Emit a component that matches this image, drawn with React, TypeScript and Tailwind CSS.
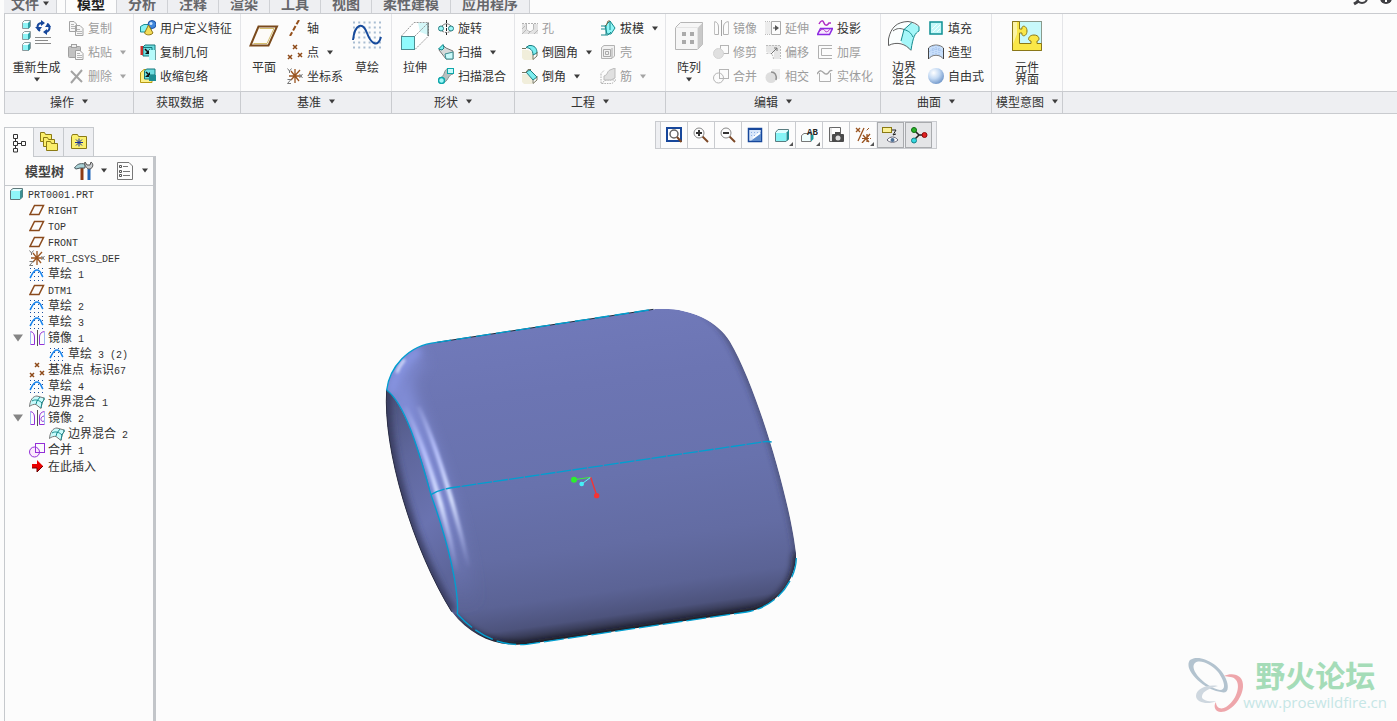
import { useState } from "react";
import type { ReactNode } from "react";

type IconProps = { w?: number; h?: number; children: ReactNode };

const Svg = ({ w = 16, h = 16, children }: IconProps) => (
    <svg width={w} height={h} viewBox={`0 0 ${w} ${h}`} fill="none" className="shrink-0" aria-hidden="true">
        {children}
    </svg>
);

const Arrow = ({ muted = false }: { muted?: boolean }) => (
    <Svg w={6} h={5}>
        <path d="M0 0.500H6L3 4.500Z" fill={muted ? "#a4a4a4" : "#3c3c3c"} />
    </Svg>
);

/* ---------- large ribbon icons ---------- */

const cube = (x: number, y: number) => (
    <>
        <path d={`M${x + 0.5} ${y + 2.5}l2-2h6v6l-2 2h-6z`} fill="#f4ffff" stroke="#8b9a9d" />
        <path d={`M${x + 1} ${y + 3}h5v5h-5z`} fill="#8ef5f7" />
        <path d={`M${x + 8} ${y + 1}v6l-2 2v-6z`} fill="#2f9ea4" />
    </>
);

const RegenerateIcon = () => (
    <Svg w={30} h={32}>
        {cube(0, 0)}
        {cube(0, 11)}
        {cube(0, 22)}
        <path d="M18 11C14 8 15 3 20 3" stroke="#17479b" strokeWidth="2" />
        <path d="M19 0v6l4-3zM13 7h7l-3 4z" fill="#17479b" />
        <path d="M25 4C29 6 28 11 24 12" stroke="#17479b" strokeWidth="2" />
        <path d="M25 9v6l-4-3zM23 7h6l-3-4z" fill="#17479b" />
        <path d="M13 17.500h16M13 20.500h13M13 23.500h16" stroke="#8a8a8a" />
    </Svg>
);

const PlaneIcon = () => (
    <Svg w={30} h={32}>
        <path d="M9.500 6.500H28L19.500 25.500H1.500Z" fill="#fdfbf8" stroke="#7a4a1c" strokeWidth="2" />
        <path d="M10.500 8.500H25L18 23.500H4.500" stroke="#d3bd6c" />
    </Svg>
);

const SketchIcon = () => (
    <Svg w={30} h={32}>
        {[2.5, 7.5, 12.5, 17.5, 22.5, 27.5].map((y) => (
            <path key={y} d={`M1 ${y}H30`} stroke="#a9bdd2" strokeWidth="2" strokeDasharray="2 3.200" />
        ))}
        <path d="M1 20C3 3 11 2 15 13S26 28 29 17" stroke="#164a9c" strokeWidth="2" />
    </Svg>
);

const ExtrudeIcon = () => (
    <Svg w={30} h={32}>
        <path d="M14 2.500H28.500V16L15 29V16H1.500Z" fill="#fff" />
        <path d="M18 2.500H28V15L20 12Z" fill="#d3f7f8" />
        <path d="M1.500 16L14 2.500H28.500V16L15 29.500M15 16L28.500 2.500" stroke="#999" strokeDasharray="2 1" />
        <path d="M28 3V16" stroke="#4d5a5d" />
        <rect x="1.500" y="16.500" width="13" height="13" fill="#90fbfc" stroke="#4d8e92" />
    </Svg>
);

const PatternIcon = () => (
    <Svg w={30} h={32}>
        <path d="M1.500 7.500L6.500 2.500H28.500V24.500L23.500 29.500H1.500Z" fill="#f6f6f6" stroke="#b5b5b5" />
        <path d="M24 7.500L28.500 3V24.500L24 29Z" fill="#c9c9c9" />
        <path d="M1.500 7.500H23.500V29.500" stroke="#e4e4e4" />
        {[8, 16].map((x) => (
            <g key={x}>
                <rect x={x} y="12" width="4" height="4" fill="#aaa" />
                <rect x={x} y="20" width="4" height="4" fill="#aaa" />
            </g>
        ))}
    </Svg>
);

const BoundaryIcon = () => (
    <Svg w={32} h={32}>
        <path d="M0.500 25.500V19C3 7 9 2 20 1.500L31 6.500V11C27 13 25 16 23 30.500L15 24C10 22 5 23 0.500 25.500Z" fill="#fbffff" />
        <path d="M24 3L31 6.500V11C27 13 25 16 23 30.500L13 22L16 10Z" fill="#a5f7f9" />
        <path d="M23 30.500C18 24 9 21 0.500 25.500V19C3 7 9 2 20 1.500C25 2 29 4 31 6.500M5 11C9 8 12 8 16 9.500" stroke="#5f5f5f" />
        <path d="M24 2.500L16 9.500L13 21M16 9.500C21 11 23 13 25 17M31 6.500V11C27 13 25 17 23 30" stroke="#12898c" />
    </Svg>
);

const ComponentIcon = () => (
    <Svg w={30} h={32}>
        <rect x="0.500" y="1.500" width="29" height="29" fill="#c8f9fb" stroke="#8a9a8c" />
        <path
            d="M0.500 1.500H7.500V9H10C9 5 15 5 15 11C15 17 9 17 10 13H7.500V23.500H19V21C15 21 16 15 22 15C28 15 28 21 25 21V23.500H29.500V30.500H0.500Z"
            fill="#f9e748"
            stroke="#8a7718"
        />
        <path d="M1 2H5V14L1 24Z" fill="#fbf3a4" />
    </Svg>
);

/* ---------- small ribbon icons ---------- */

const CopyIcon = () => (
    <Svg>
        <path d="M1.500 1.500H6L8.500 4V11.500H1.500ZM7.500 5.500H12L15 8.500V15.500H7.500Z" fill="#f6f6f6" stroke="#a3a3a3" />
        <path d="M3 4.500H6M3 6.500H7M3 8.500H7M9 9.500H12M9 11.500H14M9 13.500H14" stroke="#b5b5b5" />
    </Svg>
);

const PasteIcon = () => (
    <Svg>
        <rect x="0.500" y="2.500" width="12" height="11" rx="1" fill="#c2c2c2" stroke="#a0a0a0" />
        <rect x="3.500" y="0.500" width="5" height="3" fill="#eee" stroke="#a0a0a0" />
        <path d="M7.500 6.500H12L15 9.500V15.500H7.500Z" fill="#f8f8f8" stroke="#a0a0a0" />
        <path d="M9 9.500H12M9 11.500H14M9 13.500H14" stroke="#b5b5b5" />
    </Svg>
);

const DeleteIcon = () => (
    <Svg>
        <path d="M3 3L14 14M14 2L3 15" stroke="#a3a3a3" strokeWidth="2" />
    </Svg>
);

const UdfIcon = () => (
    <Svg>
        <path d="M0.500 6.500L4 4.500H11V10L8 12H0.500Z" fill="#87f2f4" stroke="#1c8d91" />
        <circle cx="12" cy="4.500" r="4" fill="#3f86dc" stroke="#1c51a4" />
        <circle cx="11" cy="3.500" r="1.500" fill="#cfe6ff" />
        <path d="M8.500 5L13 13C11 15.500 6 15.500 4.500 13Z" fill="#f4dc58" stroke="#8f7714" />
    </Svg>
);

const CopyGeomIcon = () => (
    <Svg>
        <path d="M3 3L5 1H15V7H10V12H3Z" fill="#6fdde0" stroke="#15777b" />
        <path d="M3 3.500H12V11" stroke="#15777b" />
        <rect x="0.500" y="2" width="2.500" height="9" fill="#c92f2b" />
        <path d="M5 5L8 8" stroke="#111" strokeWidth="1.500" />
        <path d="M10 5V10H5Z" fill="#111" />
        <rect x="9" y="6" width="7" height="10" fill="#b5fafb" />
        <path d="M15.500 6V16" stroke="#6c9da0" />
    </Svg>
);

const ShrinkwrapIcon = () => (
    <Svg>
        <path d="M0.500 4.500L4 1.500H12V14.500H0.500Z" fill="#fbf08b" stroke="#b79b12" />
        <path d="M4.500 3L6.500 1H15V7H10V11H4.500Z" fill="#6fdde0" stroke="#15777b" />
        <path d="M6 4L8 6" stroke="#111" strokeWidth="1.500" />
        <path d="M10 4V9H5Z" fill="#111" />
        <rect x="9" y="7" width="7" height="6" fill="#1d8d92" />
    </Svg>
);

const AxisIcon = () => (
    <Svg>
        <path d="M12 0L3 16" stroke="#94501c" strokeWidth="2" strokeDasharray="5 2" />
    </Svg>
);

const cross = (x: number, y: number) => <path d={`M${x} ${y}l4 4m0-4l-4 4`} stroke="#8e4a19" strokeWidth="1.500" />;

const PointIcon = () => (
    <Svg>
        {cross(6, 1)}
        {cross(1, 11)}
        {cross(11, 9)}
    </Svg>
);

const CsysIcon = () => (
    <Svg>
        <path d="M8 1V15M2 8H13M4 3L12 13M13 2L4 12" stroke="#9a5420" strokeWidth="1.300" />
        <path d="M0.500 0.500L2.500 3L4.500 0.500M2.500 3V5M12.500 6L15.500 10M15.500 6L12.500 10M0.500 11.500H4L0.500 15.500H4" stroke="#777" />
    </Svg>
);

const RevolveIcon = () => (
    <Svg>
        <path d="M8.500 0V16" stroke="#222" strokeDasharray="3 1" />
        <path d="M4 6C7 3 10 3 13 6" stroke="#777" />
        <path d="M4 11C7 13 10 13 13 11" stroke="#777" strokeDasharray="2 1" />
        <circle cx="3" cy="8.500" r="2.500" fill="#9ff7f8" stroke="#277c80" />
        <circle cx="13" cy="8.500" r="2.500" fill="#9ff7f8" stroke="#277c80" />
    </Svg>
);

const SweepIcon = () => (
    <Svg>
        <path d="M5 1L8 4L15 7V15H8L1 6Z" fill="#d5d9d9" stroke="#777" />
        <path d="M7 10L15 8V15H8Z" fill="#c9fafa" stroke="#3d8d91" />
        <path d="M0.500 5L5 0.500L6 4L4 6Z" fill="#7df0f2" stroke="#14888c" />
    </Svg>
);

const SweptBlendIcon = () => (
    <Svg>
        <path d="M1 10C8 9 5 1 10 1H15V6C9 7 11 14 4 15Z" fill="#b9c1c1" stroke="#8a9696" />
        <rect x="9.500" y="0.500" width="6" height="5" fill="#c9fafa" stroke="#0ea7ab" />
        <circle cx="3.500" cy="12.500" r="3" fill="#9ff7f8" stroke="#0ea7ab" strokeWidth="1.500" />
    </Svg>
);

const HoleIcon = () => (
    <Svg>
        <path d="M0 4H4V9L6 12H10L12 9V4H16V14H0Z" fill="#e2e2e2" />
        <path d="M0 3.500H16" stroke="#b0b0b0" strokeDasharray="2 1" />
        <path d="M4.500 4V9.500L7 11.500H9L11.500 9.500V4M0 14L4 10M0 9L3 6M12 14L16 10M6 14L8 12" stroke="#b8b8b8" />
    </Svg>
);

const RoundIcon = () => (
    <Svg>
        <path d="M0 6H6L11 9V16H2L0 14Z" fill="#f1eedb" />
        <path d="M4 3.500L7 1.500H9C14 2 15 6 15 9L11 11C11 6 8 4 4 3.500Z" fill="#7beef0" stroke="#1b7d81" />
        <path d="M0 4.500H4M11 11V15.500L15 12V8" stroke="#77765f" />
    </Svg>
);

const ChamferIcon = () => (
    <Svg>
        <path d="M0 6H5L10 11V16H2L0 14Z" fill="#f1eedb" />
        <path d="M4 4L8 2L15 9L11 12Z" fill="#7beef0" stroke="#1b7d81" />
        <path d="M0 4.500H4L6 1.500H9M11 12V15.500L15 12V8" stroke="#77765f" />
    </Svg>
);

const DraftIcon = () => (
    <Svg>
        <path d="M5 6L10 1L15 8L11 14H7Z" fill="#8ff6f7" stroke="#16898c" />
        <path d="M1 6H6V15M1 9H5M1 15H8L11 12M10 1V10" stroke="#16898c" />
        <path d="M6 6L8 1H10" stroke="#7b6d48" />
    </Svg>
);

const ShellIcon = () => (
    <Svg>
        <path d="M1.500 3.500L4 1.500H14.500V12L12 14.500H1.500Z" fill="#f1f1f1" stroke="#b2b2b2" />
        <path d="M3.500 5.500H10.500V12.500H3.500ZM5.500 7.500H8.500V10.500H5.500ZM12 4V14" stroke="#aaa" />
    </Svg>
);

const RibIcon = () => (
    <Svg>
        <path d="M1 5.500L4 2.500M1 15.500L6 12H16L12 15.500ZM1 6V15" stroke="#b0b0b0" strokeDasharray="1.500 1" />
        <path d="M4 11V8C8 7 7 3 10 2L15 0V10L11 12H4Z" fill="#e0e0e0" stroke="#bbb" />
    </Svg>
);

const MirrorIcon = ({ muted = false, swirl = false }: { muted?: boolean; swirl?: boolean }) => {
    const c = muted ? "#b2b2b2" : "#9330d8";
    return (
        <Svg>
            <path d="M1.500 1.500C4 2 5.500 4 5.500 7V14.500H1.500M15.500 1.500C12 2 10.500 4 10.500 7V14.500H15.500" stroke={c} />
            <path d="M1.500 2V14M15.500 2V14" stroke={muted ? "#c2c2c2" : "#9fbbf2"} />
            <path d="M8.500 0V16" stroke={muted ? "#a2a2a2" : "#555"} />
            {swirl && <path d="M15 6C10 7 12 13 15 11" stroke={c} />}
        </Svg>
    );
};

const TrimIcon = () => (
    <Svg>
        <rect x="7.500" y="1.500" width="8" height="8" stroke="#b5b5b5" />
        <circle cx="5.500" cy="9.500" r="5" fill="#e0e0e0" stroke="#d4d4d4" />
    </Svg>
);

const MergeIcon = ({ muted = false }: { muted?: boolean }) => (
    <Svg>
        <circle cx="5.500" cy="10" r="5" fill={muted ? "none" : "#fbeafd"} stroke={muted ? "#b5b5b5" : "#9330d8"} />
        <rect x="6.500" y="1.500" width="9" height="9" stroke={muted ? "#b5b5b5" : "#9330d8"} />
    </Svg>
);

const ExtendIcon = () => (
    <Svg>
        <rect x="0" y="2" width="6" height="12" fill="#ececec" />
        <path d="M6.500 1.500H15.500V14.500H6.500Z" stroke="#aaa" />
        <path d="M8 8H12" stroke="#555" />
        <path d="M10 5V11L14 8Z" fill="#555" />
        <path d="M0 1.500H5M0 14.500H5" stroke="#bbb" strokeDasharray="1 1" />
    </Svg>
);

const OffsetIcon = () => (
    <Svg>
        <path d="M1 1H15V15H9V8H1Z" fill="#e6e6e6" />
        <path d="M1.500 9.500C6 8 8 10 8.500 15M1 1.500H15.500V15" stroke="#bbb" strokeDasharray="2 1" />
        <path d="M6 10L12 4M9 4H12V7" stroke="#777" />
    </Svg>
);

const IntersectIcon = () => (
    <Svg>
        <rect x="7" y="1" width="8" height="10" fill="#ececec" />
        <circle cx="6" cy="9.500" r="5.500" fill="#dedede" />
        <path d="M6 4C10 4 12 7 11 12" stroke="#8f8f8f" strokeWidth="1.500" />
    </Svg>
);

const ProjectIcon = () => (
    <Svg>
        <path d="M2 4C4 0 6 0 7 3S10 6 12 3L14 3" stroke="#b02dc4" strokeWidth="1.500" />
        <path d="M3.500 8.500H15.500L12.500 14.500H0.500Z" fill="#f7e9ff" stroke="#8d2be2" strokeWidth="1.500" />
        <path d="M2 12C5 8 7 9 8 11S12 11 13 9" stroke="#b02dc4" />
    </Svg>
);

const ThickenIcon = () => (
    <Svg>
        <path d="M15 1.500H1.500V14.500H15M15 4.500H4.500V11.500H15" stroke="#b0b0b0" />
    </Svg>
);

const SolidifyIcon = () => (
    <Svg>
        <path d="M2.500 5V13.500H13.500V5" stroke="#b0b0b0" />
        <path d="M0 6C3 1 5 3 7 5S11 6 12 4S15 3 15 2" stroke="#a5a5a5" strokeWidth="1.500" />
    </Svg>
);

const FillIcon = () => (
    <Svg>
        <rect x="2" y="2" width="12" height="12" fill="#c4f8f9" stroke="#0d8f93" strokeWidth="1.500" />
        <path d="M4 9L9 4M5 12L12 5M9 12L12 9" stroke="#f4ffff" />
    </Svg>
);

const StyleIcon = () => (
    <Svg>
        <path d="M0.500 4C4 0 12 0 15.500 4V15C12 10 4 10 0.500 15Z" fill="#c7defa" stroke="#777" />
        <path d="M5 2V11M8 1V11M11 2V11M1 8C5 4 11 4 15 8" stroke="#9dbcea" strokeDasharray="1 1" />
        <path d="M0.500 4V15M15.500 4V15" stroke="#444" />
    </Svg>
);

const FreestyleIcon = () => (
    <Svg>
        <defs>
            <radialGradient id="ball" cx="0.35" cy="0.3" r="0.75">
                <stop offset="0" stopColor="#fff" />
                <stop offset="0.5" stopColor="#c3d9f3" />
                <stop offset="1" stopColor="#6e95c8" />
            </radialGradient>
        </defs>
        <circle cx="8" cy="8" r="8" fill="url(#ball)" />
    </Svg>
);

/* ---------- graphics toolbar icons ---------- */

const lens = (sign: string) => (
    <>
        <path d="M9 9L15 15" stroke="#7c4826" strokeWidth="2" />
        <circle cx="6" cy="6" r="5" fill="#fdfdfd" stroke="#888" />
        <path d={sign} stroke="#333" strokeWidth="2" />
    </>
);

const RefitIcon = () => (
    <Svg>
        <rect x="1" y="1" width="14" height="13" fill="#fff" stroke="#17479b" strokeWidth="2" />
        <circle cx="8" cy="7" r="4" fill="#fff" stroke="#666" strokeWidth="1.500" />
        <path d="M11 10L15.500 15" stroke="#7c4826" strokeWidth="2" />
    </Svg>
);
const ZoomInIcon = () => <Svg>{lens("M3 6H9M6 3V9")}</Svg>;
const ZoomOutIcon = () => <Svg>{lens("M3 6H9")}</Svg>;

const RepaintIcon = () => (
    <Svg>
        <rect x="1.500" y="1.500" width="13" height="13" fill="#d8e6fa" stroke="#17479b" strokeWidth="1.500" />
        <path d="M1 1H15V3H1Z" fill="#17479b" />
        <path d="M4 14L14 5V14Z" fill="#5d8bcb" />
        <path d="M6 11L13 6" stroke="#fff" strokeWidth="2" />
        <path d="M4 5.500H11M4 8.500H9" stroke="#8db0e4" strokeDasharray="1 2" />
    </Svg>
);

const DisplayStyleIcon = () => (
    <Svg>
        <path d="M1.500 5.500L4 2.500H14.500V12L12 14.500H1.500Z" fill="#dffdfe" stroke="#5a7c80" />
        <path d="M2 6H12V14H2Z" fill="#86f3f5" />
        <path d="M12.500 5.500L15 3V12L12.500 14.500Z" fill="#218b90" />
    </Svg>
);

const SavedViewIcon = () => (
    <Svg w={18}>
        <path d="M1.500 8.500L4 6.500H11V14.500H1.500Z" fill="#f0ffff" stroke="#777" />
        <path d="M11 8V14.500L13.500 12V8" fill="#1b9a9f" />
        <text x="7" y="8" fontSize="9" fontFamily="Liberation Mono, monospace" fontWeight="700" fill="#222">AB</text>
    </Svg>
);

const ViewManagerIcon = () => (
    <Svg>
        <path d="M1.500 0.500H12.500V14.500H1.500Z" fill="#fff" stroke="#666" />
        <path d="M3 0.500V14" stroke="#999" strokeDasharray="1 1" />
        <rect x="4" y="7" width="12" height="8" rx="1" fill="#4a4a4a" />
        <rect x="7" y="5" width="5" height="3" fill="#4a4a4a" />
        <circle cx="10" cy="11" r="2.500" fill="#ddd" />
    </Svg>
);

const DatumDisplayIcon = () => (
    <Svg>
        <path d="M1 1L5 5M5 1L1 5M9 1L3 14M8 8L14 15M15 7L7 16M12 7V15" stroke="#9a5420" strokeWidth="1.300" />
        <path d="M7 11.500H16M14 1L11 4" stroke="#9a5420" strokeDasharray="3 1" />
    </Svg>
);

const AnnotationIcon = () => (
    <Svg w={18} h={18}>
        <rect x="0.500" y="1.500" width="9" height="5" fill="#fbf196" stroke="#8b7a14" />
        <path d="M10 4H14L11 9L14 8" stroke="#222" />
        <path d="M5 14C8 10 13 10 16 14C13 17 8 17 5 14Z" fill="#fff" stroke="#667" />
        <circle cx="10.500" cy="14" r="2" fill="#4c6f96" />
    </Svg>
);

const SpinCenterIcon = () => (
    <Svg w={18} h={18}>
        <path d="M4 4L9 9L4 14M9 9H14" stroke="#222" strokeWidth="1.500" />
        <circle cx="4" cy="4" r="2.500" fill="#2bb32b" stroke="#0e6b10" />
        <circle cx="14.500" cy="9" r="2.500" fill="#e02020" stroke="#8d0b0b" />
        <circle cx="4" cy="14.500" r="2.500" fill="#35d8e0" stroke="#128087" />
    </Svg>
);

/* ---------- model tree icons ---------- */

const PartIcon = () => (
    <Svg w={14} h={14}>
        <path d="M0.500 3.500L3 1.500H12.500V10L10 12.500H0.500Z" fill="#dffdfe" stroke="#5f7779" />
        <rect x="1" y="4" width="9" height="8" fill="#90f6f8" />
        <path d="M10 4L12.500 2V10L10 12.500Z" fill="#3b9094" />
    </Svg>
);

const TreePlaneIcon = () => (
    <Svg>
        <path d="M5.500 3.500H14.500L10 12.500H1Z" stroke="#8a4a1c" strokeWidth="1.500" />
    </Svg>
);

const TreeSketchIcon = () => (
    <Svg>
        {[2.5, 6.5, 10.5, 14.5].map((y) => (
            <path key={y} d={`M1 ${y}H15`} stroke="#1f4f9d" strokeDasharray="1 3" />
        ))}
        <path d="M1 12C3 9 4 4 8 4S12 9 14 11" stroke="#1583ee" strokeWidth="1.500" />
    </Svg>
);

const TreeBlendIcon = () => (
    <Svg>
        <path d="M0.500 12.500C1 6 4 2 8 2L15 4V6C13 8 13 9 12 14.500L7 10.500C5 10 2 11 0.500 12.500Z" fill="#c8fbfc" stroke="#777" />
        <path d="M11 3L8 7L7 10M15 3.500V6C13 8 13 9 12 14M3 7C6 5 10 6 13 9" stroke="#12898c" />
    </Svg>
);

const InsertIcon = () => (
    <Svg>
        <path d="M3 6H8V2L14 8L8 14V10H3Z" fill="#e90000" />
        <path d="M3 10H8V14L14 8" stroke="#6b0000" />
    </Svg>
);

const FolderBase = ({ x, y }: { x: number; y: number }) => (
    <path d={`M${x + 0.5} ${y + 0.5}h4l1 2h6v7h-11z`} fill="#fbee6a" stroke="#8b7a14" />
);

const TreeTabIcon = () => (
    <Svg w={14} h={20}>
        <path d="M3.500 5V8M3.500 12V15M6 10.500H9" stroke="#333" />
        <path d="M1.500 1.500H5.500V5.500H1.500ZM1.500 8.500H5.500V12.500H1.500ZM1.500 15.500H5.500V19H1.500ZM9.500 8.500H13.500V12.500H9.500Z" stroke="#333" />
    </Svg>
);

const FoldersIcon = () => (
    <Svg w={20} h={20}>
        <FolderBase x={1} y={0} />
        <FolderBase x={4} y={5} />
        <FolderBase x={7} y={9} />
    </Svg>
);

const FavoritesIcon = () => (
    <Svg w={18} h={18}>
        <path d="M1.500 3.500L2.500 1.500H7.500L8.500 3.500H16.500V15.500H1.500Z" fill="#fbf06e" stroke="#8b7a14" />
        <path d="M9 5.500V13.500M5 9.500H13M6 6.500L12 12.500M12 6.500L6 12.500" stroke="#17319b" />
    </Svg>
);

const ToolsIcon = () => (
    <Svg w={20} h={20}>
        <path d="M8 7V19" stroke="#8c3b14" strokeWidth="3" />
        <path d="M0.500 7C3 3 6 2 11 3V7H6L2 8Z" fill="#a9d2d7" stroke="#46555a" />
        <path d="M15 8V19" stroke="#2366b8" strokeWidth="3" />
        <path d="M11 1L13 4H16L17 1C20 3 19 7 16 8H14C12 6 10 4 11 1Z" fill="#c9cccf" stroke="#555" />
    </Svg>
);

const ListIcon = () => (
    <Svg w={18} h={20}>
        <path d="M1.500 1.500H13L16.500 5V18.500H1.500Z" fill="#fdfdfd" stroke="#777" />
        <path d="M7 5.500H12M7 10.500H14M7 14.500H14" stroke="#777" />
        <path d="M3.500 4.500H5.500V6.500H3.500ZM3.500 9.500H5.500V11.500H3.500ZM3.500 13.500H5.500V15.500H3.500Z" stroke="#555" />
    </Svg>
);

/* ---------- ribbon ---------- */

type Command = { label: string; icon: ReactNode; muted?: boolean; menu?: boolean };

const Tool = ({ label, icon, muted = false, menu = false }: Command) => (
    <button
        type="button"
        disabled={muted}
        className={`flex h-6 items-center gap-1 whitespace-nowrap ${muted ? "text-[#9c9c9c]" : "text-[#333333]"}`}
    >
        {icon}
        <span>{label}</span>
        {menu && (
            <span className="ml-1">
                <Arrow muted={muted} />
            </span>
        )}
    </button>
);

const ToolColumn = ({ items }: { items: Command[] }) => (
    <div className="flex flex-col items-start pt-0.5">
        {items.map((item) => (
            <Tool key={item.label} {...item} />
        ))}
    </div>
);

const BigTool = ({ lines, icon, menu = false, wide = false }: { lines: string[]; icon: ReactNode; menu?: boolean; wide?: boolean }) => (
    <button
        type="button"
        className={`flex shrink-0 flex-col items-center whitespace-nowrap pt-1.5 leading-3 text-[#333333] ${wide ? "w-[63px]" : "w-[46px]"}`}
    >
        <span className="mb-[9px] flex h-8 items-center">{icon}</span>
        {lines.map((line) => (
            <span key={line}>{line}</span>
        ))}
        {menu && (
            <span className="mt-1">
                <Arrow />
            </span>
        )}
    </button>
);

const Group = ({ title, width, children }: { title: string; width: string; children: ReactNode }) => (
    <section className={`flex shrink-0 flex-col ${width}`}>
        <div className="flex h-[77px] border-r border-[#e4e5e8]">{children}</div>
        <button
            type="button"
            className="flex h-[22px] items-center justify-center gap-2 whitespace-nowrap border-r border-t border-[#c9cbcf] bg-[#eeeff2] pb-0.5 text-[#333333]"
        >
            {title}
            <Arrow />
        </button>
    </section>
);

const Ribbon = () => (
    <div className="ml-1 flex border-b border-l border-[#c9cbcf]">
        <Group title="操作" width="w-[129px]">
            <BigTool lines={["重新生成"]} icon={<RegenerateIcon />} menu wide />
            <ToolColumn
                items={[
                    { label: "复制", icon: <CopyIcon />, muted: true },
                    { label: "粘贴", icon: <PasteIcon />, muted: true, menu: true },
                    { label: "删除", icon: <DeleteIcon />, muted: true, menu: true },
                ]}
            />
        </Group>
        <Group title="获取数据" width="w-[107px]">
            <div className="pl-1.5">
                <ToolColumn
                    items={[
                        { label: "用户定义特征", icon: <UdfIcon /> },
                        { label: "复制几何", icon: <CopyGeomIcon /> },
                        { label: "收缩包络", icon: <ShrinkwrapIcon /> },
                    ]}
                />
            </div>
        </Group>
        <Group title="基准" width="w-[151px]">
            <BigTool lines={["平面"]} icon={<PlaneIcon />} />
            <ToolColumn
                items={[
                    { label: "轴", icon: <AxisIcon /> },
                    { label: "点", icon: <PointIcon />, menu: true },
                    { label: "坐标系", icon: <CsysIcon /> },
                ]}
            />
            <div className="flex flex-1 justify-center">
                <BigTool lines={["草绘"]} icon={<SketchIcon />} />
            </div>
        </Group>
        <Group title="形状" width="w-[123px]">
            <BigTool lines={["拉伸"]} icon={<ExtrudeIcon />} />
            <ToolColumn
                items={[
                    { label: "旋转", icon: <RevolveIcon /> },
                    { label: "扫描", icon: <SweepIcon />, menu: true },
                    { label: "扫描混合", icon: <SweptBlendIcon /> },
                ]}
            />
        </Group>
        <Group title="工程" width="w-[151px]">
            <div className="flex gap-2 pl-[7px]">
                <ToolColumn
                    items={[
                        { label: "孔", icon: <HoleIcon />, muted: true },
                        { label: "倒圆角", icon: <RoundIcon />, menu: true },
                        { label: "倒角", icon: <ChamferIcon />, menu: true },
                    ]}
                />
                <ToolColumn
                    items={[
                        { label: "拔模", icon: <DraftIcon />, menu: true },
                        { label: "壳", icon: <ShellIcon />, muted: true },
                        { label: "筋", icon: <RibIcon />, muted: true, menu: true },
                    ]}
                />
            </div>
        </Group>
        <Group title="编辑" width="w-[215px]">
            <BigTool lines={["阵列"]} icon={<PatternIcon />} menu />
            <div className="flex gap-2 pl-px">
                <ToolColumn
                    items={[
                        { label: "镜像", icon: <MirrorIcon muted />, muted: true },
                        { label: "修剪", icon: <TrimIcon />, muted: true },
                        { label: "合并", icon: <MergeIcon muted />, muted: true },
                    ]}
                />
                <ToolColumn
                    items={[
                        { label: "延伸", icon: <ExtendIcon />, muted: true },
                        { label: "偏移", icon: <OffsetIcon />, muted: true },
                        { label: "相交", icon: <IntersectIcon />, muted: true },
                    ]}
                />
                <ToolColumn
                    items={[
                        { label: "投影", icon: <ProjectIcon /> },
                        { label: "加厚", icon: <ThickenIcon />, muted: true },
                        { label: "实体化", icon: <SolidifyIcon />, muted: true },
                    ]}
                />
            </div>
        </Group>
        <Group title="曲面" width="w-[111px]">
            <BigTool lines={["边界", "混合"]} icon={<BoundaryIcon />} />
            <div className="pl-px">
                <ToolColumn
                    items={[
                        { label: "填充", icon: <FillIcon /> },
                        { label: "造型", icon: <StyleIcon /> },
                        { label: "自由式", icon: <FreestyleIcon /> },
                    ]}
                />
            </div>
        </Group>
        <Group title="模型意图" width="w-[71px]">
            <div className="flex w-full justify-center">
                <BigTool lines={["元件", "界面"]} icon={<ComponentIcon />} />
            </div>
        </Group>
        <div className="mt-[77px] flex-1 border-t border-[#c9cbcf] bg-[#eeeff2]" />
    </div>
);

const TABS = ["模型", "分析", "注释", "渲染", "工具", "视图", "柔性建模", "应用程序"];

const TabStrip = () => {
    const [active, setActive] = useState("模型");

    return (
        <header className="ml-1 flex h-3.5 items-end overflow-hidden border-b border-[#c9cbcf] text-sm font-bold text-[#66676b]">
            <button type="button" className="flex h-5 items-center gap-1 border-r border-[#cfd1d5] bg-[#eeeff2] px-[7px]">
                文件
                <Arrow />
            </button>
            <nav className="ml-2 flex">
                {TABS.map((tab) => (
                    <button
                        key={tab}
                        type="button"
                        onClick={() => setActive(tab)}
                        className={`h-5 whitespace-nowrap border-r border-[#cfd1d5] px-[11px] ${
                            tab === active ? "border-l bg-[#fcfcfc] text-[#222222]" : "bg-[#eeeff2]"
                        }`}
                    >
                        {tab}
                    </button>
                ))}
            </nav>
            <div className="ml-auto flex h-5 items-start gap-2.5 pr-1">
                <button type="button" aria-label="搜索">
                    <Svg w={16} h={14}>
                        <circle cx="9" cy="5" r="5" stroke="#3f3f43" strokeWidth="2" />
                        <path d="M6 8L1 11" stroke="#3f3f43" strokeWidth="3" />
                    </Svg>
                </button>
                <button type="button" aria-label="帮助">
                    <Svg w={14} h={14}>
                        <circle cx="7" cy="5" r="6" fill="#3f3f43" />
                        <rect x="6" y="7" width="2" height="2" fill="#fff" />
                    </Svg>
                </button>
            </div>
        </header>
    );
};

/* ---------- model tree ---------- */

type Node = { name: string; icon: ReactNode; children?: Node[] };

const TREE: Node[] = [
    { name: "RIGHT", icon: <TreePlaneIcon /> },
    { name: "TOP", icon: <TreePlaneIcon /> },
    { name: "FRONT", icon: <TreePlaneIcon /> },
    { name: "PRT_CSYS_DEF", icon: <CsysIcon /> },
    { name: "草绘 1", icon: <TreeSketchIcon /> },
    { name: "DTM1", icon: <TreePlaneIcon /> },
    { name: "草绘 2", icon: <TreeSketchIcon /> },
    { name: "草绘 3", icon: <TreeSketchIcon /> },
    { name: "镜像 1", icon: <MirrorIcon />, children: [{ name: "草绘 3 (2)", icon: <TreeSketchIcon /> }] },
    { name: "基准点 标识67", icon: <PointIcon /> },
    { name: "草绘 4", icon: <TreeSketchIcon /> },
    { name: "边界混合 1", icon: <TreeBlendIcon /> },
    { name: "镜像 2", icon: <MirrorIcon swirl />, children: [{ name: "边界混合 2", icon: <TreeBlendIcon /> }] },
    { name: "合并 1", icon: <MergeIcon /> },
    { name: "在此插入", icon: <InsertIcon /> },
];

// Latin runs are set smaller so that they take half the width of a Chinese character
const Name = ({ text }: { text: string }) => (
    <span className="whitespace-pre">
        {text.split(/([\x20-\x7e]+)/).map((run, i) => (
            <span key={i} className={i % 2 ? "font-['Liberation_Mono',monospace] text-[10px]" : ""}>
                {run}
            </span>
        ))}
    </span>
);

const TreeRow = ({ node, nested = false }: { node: Node; nested?: boolean }) => {
    const [open, setOpen] = useState(true);

    return (
        <li>
            <div className={`flex h-4 items-center gap-[3px] ${nested ? "pl-11" : "pl-2"}`}>
                {!nested && (
                    <span className="flex w-[13px] items-center">
                        {node.children && (
                            <button type="button" aria-label={node.name} aria-expanded={open} onClick={() => setOpen(!open)}>
                                <Svg w={10} h={8}>
                                    <path d="M0 0.500H10L5 7.500Z" fill="#858585" />
                                </Svg>
                            </button>
                        )}
                    </span>
                )}
                {node.icon}
                <Name text={node.name} />
            </div>
            {open && node.children && (
                <ul>
                    {node.children.map((child) => (
                        <TreeRow key={child.name} node={child} nested />
                    ))}
                </ul>
            )}
        </li>
    );
};

const Navigator = () => (
    <aside className="ml-1 flex w-[152px] shrink-0 flex-col pt-[13px]">
        <div className="z-10 -mb-px flex">
            <button type="button" aria-label="模型树" className="flex h-[30px] w-[30px] items-center justify-center border border-b-0 border-[#c6c9cd] bg-[#fcfcfc]">
                <TreeTabIcon />
            </button>
            <button type="button" aria-label="文件夹浏览器" className="flex h-[29px] w-[30px] items-center justify-center border border-b-0 border-l-0 border-[#c6c9cd] bg-[#eeeff2]">
                <FoldersIcon />
            </button>
            <button type="button" aria-label="收藏夹" className="flex h-[29px] w-[30px] items-center justify-center border border-b-0 border-l-0 border-[#c6c9cd] bg-[#eeeff2]">
                <FavoritesIcon />
            </button>
        </div>
        <div className="flex-1 border-l border-r-3 border-t border-l-[#c6c9cd] border-r-[#c2c5c9] border-t-[#c6c9cd]">
            <div className="flex h-[29px] items-center border-b border-[#c6c9cd] pb-px pl-5">
                <h2 className="mr-2.5 whitespace-nowrap text-[13px] font-bold text-[#444444]">模型树</h2>
                <button type="button" aria-label="设置" className="flex items-center gap-[7px]">
                    <ToolsIcon />
                    <Arrow />
                </button>
                <button type="button" aria-label="显示" className="ml-[9px] flex items-center gap-2">
                    <ListIcon />
                    <Arrow />
                </button>
            </div>
            <div className="flex h-4 items-center gap-1 pl-[5px] text-[#333333]">
                <PartIcon />
                <Name text="PRT0001.PRT" />
            </div>
            <ul className="text-[#333333]">
                {TREE.map((node) => (
                    <TreeRow key={node.name} node={node} />
                ))}
            </ul>
        </div>
    </aside>
);

/* ---------- graphics area ---------- */

const VIEW_TOOLS = [
    { label: "重新调整", icon: <RefitIcon /> },
    { label: "放大", icon: <ZoomInIcon /> },
    { label: "缩小", icon: <ZoomOutIcon /> },
    { label: "重画", icon: <RepaintIcon /> },
    { label: "显示样式", icon: <DisplayStyleIcon />, menu: true },
    { label: "已保存方向", icon: <SavedViewIcon />, menu: true },
    { label: "视图管理器", icon: <ViewManagerIcon /> },
    { label: "基准显示过滤器", icon: <DatumDisplayIcon />, menu: true },
    { label: "注释显示", icon: <AnnotationIcon />, pressed: true },
    { label: "旋转中心", icon: <SpinCenterIcon />, pressed: true },
];

const ViewToolbar = () => (
    <div className="flex h-7 w-fit border border-[#c9cbcf] bg-[#eeeff2] px-1">
        {VIEW_TOOLS.map(({ label, icon, menu, pressed }) => (
            <button
                key={label}
                type="button"
                aria-label={label}
                aria-pressed={pressed}
                className={`relative flex items-center justify-center ${
                    pressed ? "ml-px w-[27px] border border-[#a9abae] bg-[#e4e5e7]" : "w-[27px] border-l border-[#c9cbcf] bg-[#fcfcfc]"
                }`}
            >
                {icon}
                {menu && (
                    <svg width="4" height="4" viewBox="0 0 4 4" className="absolute bottom-0.5 right-0.5">
                        <path d="M4 0V4H0Z" fill="#555" />
                    </svg>
                )}
            </button>
        ))}
    </div>
);

const BODY =
    "M50 300C58 235 112 165 200 157L850 58C950 48 1040 90 1080 155C1165 300 1262 640 1278 790C1282 865 1220 952 1130 966L470 1063C380 1072 305 1040 245 965C130 780 38 480 50 300Z";
const CAP = "M50 300C110 345 178 570 183 614C235 760 262 880 262 972L245 965C130 780 38 480 50 300Z";

const Model = () => (
    <svg viewBox="0 0 1350 1110" fill="none" className="ml-[214px] mt-[141px] h-[370px] w-[450px]" role="img" aria-label="PRT0001">
        <defs>
            <linearGradient id="body" gradientUnits="userSpaceOnUse" x1="590" y1="100" x2="720" y2="1025">
                <stop offset="0" stopColor="#7079b9" />
                <stop offset="0.2" stopColor="#6c75b3" />
                <stop offset="0.5" stopColor="#6872ad" />
                <stop offset="0.72" stopColor="#636ca3" />
                <stop offset="0.87" stopColor="#5b6395" />
                <stop offset="0.95" stopColor="#4d537c" />
                <stop offset="1" stopColor="#262838" />
            </linearGradient>
            <linearGradient id="cap" x1="0" y1="0" x2="0.3" y2="1">
                <stop offset="0" stopColor="#4b5279" />
                <stop offset="0.35" stopColor="#5f679d" />
                <stop offset="0.7" stopColor="#6a73b0" />
                <stop offset="1" stopColor="#5d659a" />
            </linearGradient>
            <linearGradient id="band" gradientUnits="userSpaceOnUse" x1="0" y1="180" x2="0" y2="960">
                <stop offset="0" stopColor="#7f8bd4" stopOpacity="0.6" />
                <stop offset="0.2" stopColor="#818dd7" />
                <stop offset="0.6" stopColor="#7c87cf" />
                <stop offset="1" stopColor="#6872ad" stopOpacity="0" />
            </linearGradient>
            <filter id="soft" x="-50%" y="-50%" width="200%" height="200%">
                <feGaussianBlur stdDeviation="20" />
            </filter>
            <filter id="edge" x="-50%" y="-50%" width="200%" height="200%">
                <feGaussianBlur stdDeviation="11" />
            </filter>
            <filter id="glint" x="-50%" y="-50%" width="200%" height="200%">
                <feGaussianBlur stdDeviation="4" />
            </filter>
            <linearGradient id="shine" gradientUnits="userSpaceOnUse" x1="100" y1="340" x2="290" y2="840">
                <stop offset="0" stopColor="#c3ccff" stopOpacity="0" />
                <stop offset="0.3" stopColor="#b4befa" />
                <stop offset="0.6" stopColor="#d9e2ff" />
                <stop offset="1" stopColor="#b4bdfb" stopOpacity="0" />
            </linearGradient>
            <clipPath id="bodyClip">
                <path d={BODY} />
            </clipPath>
            <clipPath id="capClip">
                <path d={CAP} />
            </clipPath>
        </defs>
        <g clipPath="url(#bodyClip)">
            <path d={BODY} fill="url(#body)" />
            <path d="M150 190C70 230 80 300 125 400C190 560 245 740 285 960" stroke="url(#band)" strokeWidth="80" filter="url(#soft)" />
            <path d="M62 310C75 250 105 210 150 180" stroke="#8794e2" strokeWidth="26" filter="url(#edge)" />
            <path d="M1000 60C1050 90 1085 150 1110 205C1192 380 1266 640 1286 800" stroke="#30344f" strokeWidth="12" filter="url(#edge)" />
            <path d="M1288 790C1292 880 1230 968 1130 980L470 1078C390 1086 310 1056 240 990" stroke="#14151f" strokeWidth="34" filter="url(#edge)" />
            <path d="M105 350C160 460 225 660 262 850" stroke="url(#shine)" strokeWidth="14" filter="url(#glint)" />
            <path d="M145 350C195 455 255 650 296 830" stroke="url(#shine)" strokeWidth="13" filter="url(#glint)" />
            <path d="M80 248C86 232 94 220 104 208" stroke="#dfe5ff" strokeWidth="8" filter="url(#glint)" />
        </g>
        <path d={CAP} fill="url(#cap)" />
        <g clipPath="url(#capClip)">
            <path d="M50 300C38 480 130 780 245 965" stroke="#34395a" strokeWidth="26" filter="url(#edge)" />
        </g>
        <path d="M50 300C38 480 130 780 245 965" stroke="#2b2e45" strokeWidth="3" />
        <path d="M200 157L850 58" stroke="#1c2a3c" strokeWidth="3" />
        <g stroke="#009fd0" strokeWidth="4">
            <path d="M50 300C58 235 112 165 200 157" />
            <path d="M200 157L850 58" strokeDasharray="44 16" />
            <path d="M50 300C110 345 150 500 183 614C235 760 268 900 262 972" />
            <path d="M262 972C320 1035 390 1070 470 1063L1130 966C1220 952 1280 870 1279 800" strokeDasharray="60 12" />
            <path d="M183 614C200 603 215 599 240 594L1165 458Q1190 452 1205 456" strokeDasharray="44 4" />
        </g>
        <path d="M612 569L662 562" stroke="#3bf03b" strokeWidth="3" />
        <path d="M662 562L635 582" stroke="#5cf4fa" strokeWidth="3" />
        <path d="M662 562L680 616" stroke="#f63434" strokeWidth="4" />
        <circle cx="612" cy="569" r="9" fill="#2bf02b" />
        <circle cx="635" cy="582" r="7" fill="#45f1f8" />
        <circle cx="680" cy="617" r="8" fill="#f63434" />
    </svg>
);

const Watermark = () => (
    <div className="absolute bottom-1.5 right-2.5 flex items-center">
        <svg width="58" height="58" viewBox="0 0 58 58" className="-mr-0.5">
            <path
                fillRule="evenodd"
                fill="#b3c3cf"
                d="M3 3C13-4 34 8 39 22C43 32 40 37 34 35C20 34-5 14 3 3ZM8 6C1 13 20 31 33 33C40 33 37 23 31 15C24 7 13 2 8 6Z"
            />
            <path
                fillRule="evenodd"
                fill="#eea6ab"
                d="M37 19C46 15 57 18 56 30C55 42 44 55 34 55C28 55 26 49 29 45C29 51 34 53 39 50C49 44 54 29 49 23C46 19 41 20 37 19Z"
            />
            <path fillRule="evenodd" fill="#ced7df" d="M31 29C20 27 9 32 9 39C9 46 22 48 29 44C21 45 14 43 15 39C16 34 23 31 31 29Z" />
        </svg>
        <div className="flex flex-col items-start">
            <span className="pl-3 text-[30px] font-bold leading-8 text-[#a5dcb8]">野火论坛</span>
            <a href="http://www.proewildfire.cn" className="font-['Open_Sans',sans-serif] text-[15px] leading-6 text-[#c6e6e6]">
                www.proewildfire.cn
            </a>
        </div>
    </div>
);

export default function App() {
    return (
        <div className="flex min-h-screen flex-col overflow-x-hidden bg-[#fcfcfc] font-['Noto_Sans_CJK_SC',sans-serif] text-xs">
            <TabStrip />
            <Ribbon />
            <div className="flex flex-1">
                <Navigator />
                <main className="relative min-w-0 flex-1 pt-[7px]">
                    <div className="pl-[499px]">
                        <ViewToolbar />
                    </div>
                    <Model />
                    <Watermark />
                </main>
            </div>
        </div>
    );
}
